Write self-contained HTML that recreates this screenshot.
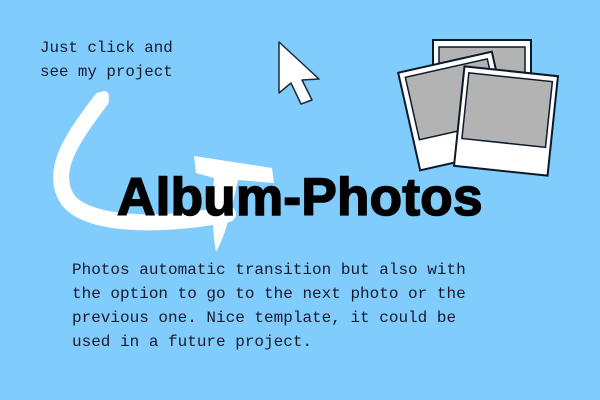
<!DOCTYPE html>
<html><head><style>
body{margin:0;width:600px;height:400px;background:#80ccfc;position:relative;overflow:hidden;font-family:"Liberation Mono",monospace;color:#1a1a2e}
.t{position:absolute;font-size:15.8px;line-height:24px;white-space:pre}
h1{position:absolute;left:117px;top:168px;margin:0;font:bold 53px/60px "Liberation Sans",sans-serif;color:#000;letter-spacing:0.3px;-webkit-text-stroke:1.6px #000}
</style></head><body>
<svg width="600" height="400" style="position:absolute;left:0;top:0">
<path d="M101,100 C75,135 48,170 68,200 C90,228 170,226 228,214" fill="none" stroke="#fff" stroke-width="16" stroke-linecap="round"/>
<path d="M104,96 C90,115 75,130 66,150" fill="none" stroke="#fff" stroke-width="10" stroke-linecap="round"/>
<path d="M194,156 L272,168 L274,183 L238,180 C232,205 228,230 216,252 C212,228 212,202 214,178 L196,173 Z" fill="#fff"/>
<path d="M279,42 L279,93 L291,83 L301,104 L312,100 L302,80 L319,79 Z" fill="#fff" stroke="#1a2a3a" stroke-width="1.5" stroke-linejoin="round"/>
<g>
<rect x="433" y="40" width="98" height="100" fill="#fff" stroke="#0a1a2a" stroke-width="2"/>
<rect x="439" y="47" width="86" height="60" fill="#b3b3b3" stroke="#0a1a2a" stroke-width="1.5"/>
</g>
<g transform="translate(456,111) rotate(-12.7)">
<rect x="-48" y="-50" width="96" height="100" fill="#fff" stroke="#0a1a2a" stroke-width="2"/>
<rect x="-42" y="-44" width="84" height="64" fill="#b3b3b3" stroke="#0a1a2a" stroke-width="1.5"/>
</g>
<g transform="translate(506,121) rotate(6)">
<rect x="-47" y="-50" width="94" height="100" fill="#fff" stroke="#0a1a2a" stroke-width="2"/>
<rect x="-42" y="-44" width="84" height="66" fill="#b3b3b3" stroke="#0a1a2a" stroke-width="1.5"/>
</g>
</svg>
<div class="t" style="left:40px;top:36px">Just click and
see my project</div>
<h1>Album-Photos</h1>
<div class="t" style="left:72px;top:258px;font-size:16px">Photos automatic transition but also with
the option to go to the next photo or the
previous one. Nice template, it could be
used in a future project.</div>
</body></html>
